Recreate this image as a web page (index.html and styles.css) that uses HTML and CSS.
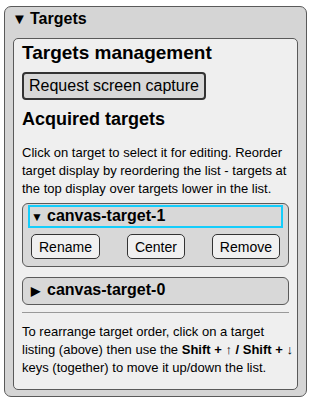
FILE: index.html
```html
<!DOCTYPE html>
<html lang="en">
<head>
  <meta charset="UTF-8">
  <meta name="viewport" content="width=device-width, initial-scale=1">
  <title>Targets</title>
  <link rel="stylesheet" href="styles.css">
</head>
<body>

<div class="panel">
  <div class="panel-header"><span class="caret">&#9660;</span>Targets</div>

  <div class="panel-body">
    <h2>Targets management</h2>
    <button class="capture-button">Request screen capture</button>

    <h3>Acquired targets</h3>
    <p class="hint">Click on target to select it for editing. Reorder target display by reordering the list - targets at the top display over targets lower in the list.</p>

    <!-- Target list -->
    <div class="target open">
      <div class="target-title selected"><span class="caret">&#9660;</span>canvas-target-1</div>
      <div class="target-actions">
        <button class="small-button">Rename</button>
        <button class="small-button">Center</button>
        <button class="small-button">Remove</button>
      </div>
    </div>

    <div class="target">
      <div class="target-title"><span class="caret">&#9654;</span>canvas-target-0</div>
    </div>

    <hr class="divider">

    <p class="hint keys-hint">To rearrange target order, click on a target listing (above) then use the <b>Shift + &#8593; / Shift + &#8595;</b> keys (together) to move it up/down the list.</p>
  </div>
</div>

</body>
</html>
```

FILE: styles.css
```css
body {
  font-family: "Liberation Sans", Arial, sans-serif;
  margin: 0;
  padding: 6px 6px 3px 4px;
  background: #fff;
  color: #000;
}

/* Outer panel */
.panel {
  background: #d5d5d5;
  border: 1px solid #5a5a5a;
  border-radius: 7px;
  padding: 0 8px 6px 8px;
}

.panel-header {
  font-size: 16px;
  font-weight: bold;
  line-height: 20px;
  padding: 2px 0 0 0;
  margin-bottom: 9px;
}

.panel-header .caret {
  width: 17px;
  font-size: 15px;
}

.caret {
  display: inline-block;
  width: 15px;
  font-size: 12px;
  margin-left: -1px;
  margin-right: 1px;
}

/* Inner panel */
.panel-body {
  background: #efefef;
  border: 1px solid #5a5a5a;
  border-radius: 5px;
  padding: 2px 8px 12px 8px;
}

.panel-body h2 {
  margin: 0;
  font-size: 19px;
  line-height: 24px;
}

.capture-button {
  font-family: inherit;
  font-size: 16px;
  margin-top: 7px;
  height: 28px;
  padding: 0 5px;
  background: #d8d8d8;
  border: 2px solid #333;
  border-radius: 4px;
  color: #000;
}

.panel-body h3 {
  margin: 8px 0 0;
  font-size: 18px;
  line-height: 22px;
}

.hint {
  margin: 14px 0 0;
  font-size: 13px;
  line-height: 18px;
}

/* Target items */
.target {
  background: #d8d8d8;
  border: 1px solid #5a5a5a;
  border-radius: 6px;
  padding: 1px 5px 2px;
  margin-top: 10px;
}

.target.open {
  margin-top: 5px;
  padding-bottom: 7px;
}

.target-title {
  font-size: 16px;
  font-weight: bold;
  line-height: 18px;
  border: 2px solid transparent;
  padding-left: 2px;
}

.target-title.selected {
  border-color: #14cdfb;
}

.target-actions {
  display: flex;
  justify-content: space-between;
  padding: 0 3px;
  margin-top: 6px;
}

.small-button {
  font-family: inherit;
  font-size: 14px;
  height: 25px;
  padding: 0 7px;
  background: #f0f0f0;
  border: 1px solid #333;
  border-radius: 5px;
  color: #000;
}

.divider {
  border: none;
  border-top: 1px solid #999;
  margin: 7px 0 0;
}

.keys-hint {
  margin-top: 10px;
  margin-right: -7px;
}
```
